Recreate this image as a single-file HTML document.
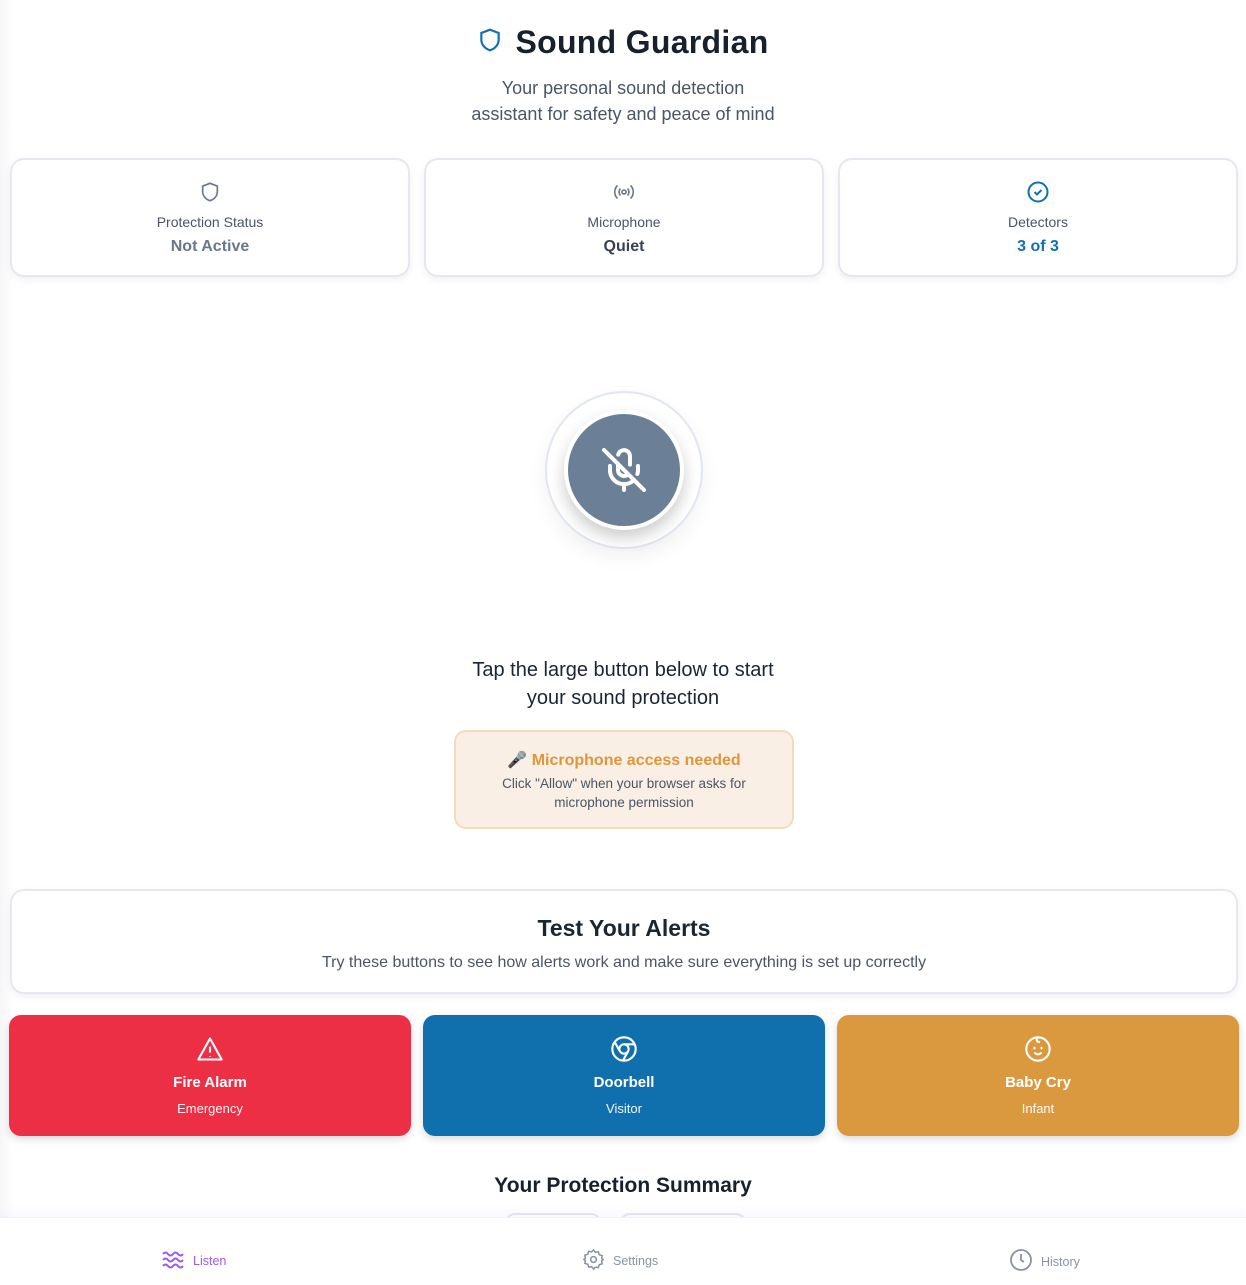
<!DOCTYPE html>
<html><head><meta charset="utf-8"><style>
*{box-sizing:border-box;margin:0;padding:0}
body{width:1246px;height:1285px;overflow:hidden;background:linear-gradient(90deg,#f6f6f8 0,#fff 14px);font-family:"Liberation Sans",sans-serif;position:relative;color:#1b2533}
.abs{position:absolute}
h1{position:absolute;top:24px;left:0;width:1246px;text-align:center;font-size:32px;font-weight:900;color:#17202c;letter-spacing:.3px}
.sub{top:75px;left:0;width:1246px;text-align:center;font-size:18px;line-height:26px;color:#4b5565}
.card{background:#fff;border:2px solid #e6e8f0;border-radius:14px;box-shadow:0 3px 8px rgba(0,0,0,.06);text-align:center}
.stat{top:158px;width:400px;height:119px}
.stat svg{margin-top:20px}
.stat .l{font-size:14px;color:#4b5565;margin-top:5px}
.stat .v{font-size:16px;font-weight:bold;margin-top:8px}
.btn{top:1015px;width:402px;height:121px;border-radius:12px;color:#fff;text-align:center;box-shadow:0 3px 8px rgba(0,0,0,.15)}
.btn svg{margin-top:20px}
.btn .t{font-size:15px;font-weight:bold;margin-top:6px}
.btn .s{font-size:13px;margin-top:10px;opacity:.95}
</style></head><body>
<h1><svg width="26" height="30" viewBox="0 0 24 24" fill="none" stroke="#1270b0" stroke-width="2" style="vertical-align:-2px;margin-right:12px"><path d="M12 2.5l8 3v6c0 5-3.5 8.5-8 10-4.5-1.5-8-5-8-10v-6z"/></svg>Sound Guardian</h1>
<div class="abs sub">Your personal sound detection<br>assistant for safety and peace of mind</div>

<div class="abs card stat" style="left:10px"><svg width="22" height="24" viewBox="0 0 24 24" fill="none" stroke="#6b7788" stroke-width="1.8"><path d="M12 2.5l8 3v6c0 5-3.5 8.5-8 10-4.5-1.5-8-5-8-10v-6z"/></svg><div class="l">Protection Status</div><div class="v" style="color:#6b7788">Not Active</div></div>
<div class="abs card stat" style="left:424px"><svg width="24" height="24" viewBox="0 0 24 24" fill="none" stroke="#6b7788" stroke-width="1.6"><circle cx="12" cy="12" r="2"/><path d="M8.5 8.5a5 5 0 000 7M15.5 8.5a5 5 0 010 7M5.5 5.5a9 9 0 000 13M18.5 5.5a9 9 0 010 13"/></svg><div class="l">Microphone</div><div class="v" style="color:#384252">Quiet</div></div>
<div class="abs card stat" style="left:838px"><svg width="24" height="24" viewBox="0 0 24 24" fill="none" stroke="#1270b0" stroke-width="2"><circle cx="12" cy="12" r="9.5"/><path d="M8.5 12l2.5 2.5 4.5-4.5"/></svg><div class="l">Detectors</div><div class="v" style="color:#1270b0">3 of 3</div></div>

<div class="abs" style="left:545px;top:391px;width:158px;height:158px;border-radius:50%;background:#fff;border:2px solid #e1e6f0;box-shadow:0 8px 20px rgba(0,0,0,.06)"></div>
<div class="abs" style="left:564px;top:410px;width:120px;height:120px;border-radius:50%;background:#6b7f96;border:4px solid #fff;box-shadow:0 8px 16px rgba(0,0,0,.2)"></div>
<svg class="abs" style="left:600px;top:446px" width="48" height="48" viewBox="0 0 24 24" fill="none" stroke="#fff" stroke-width="2" stroke-linecap="round"><path d="M2 2l20 20"/><path d="M9 9v3a3 3 0 005 2.2M15 9.3V5a3 3 0 00-5.9-.7"/><path d="M5 10v2a7 7 0 0012 5M19 10v2c0 .8-.1 1.4-.3 2"/><path d="M12 19v3"/></svg>

<div class="abs" style="top:656px;left:0;width:1246px;text-align:center;font-size:20px;line-height:28px;color:#1b2533">Tap the large button below to start<br>your sound protection</div>
<div class="abs" style="left:454px;top:730px;width:340px;height:99px;background:#f9efe4;border:2px solid #f3dcbc;border-radius:12px;text-align:center">
<div style="margin-top:18px;font-size:16px;font-weight:bold;color:#e0963a">🎤 Microphone access needed</div>
<div style="font-size:13.5px;line-height:19px;color:#4b5565;margin-top:4px">Click "Allow" when your browser asks for<br>microphone permission</div></div>

<div class="abs card" style="left:10px;top:889px;width:1228px;height:105px">
<div style="font-size:23px;font-weight:bold;margin-top:24px;color:#1b2533">Test Your Alerts</div>
<div style="font-size:16px;color:#4b5565;margin-top:12px">Try these buttons to see how alerts work and make sure everything is set up correctly</div></div>

<div class="abs btn" style="left:9px;background:#ec2f45"><svg width="28" height="28" viewBox="0 0 24 24" fill="none" stroke="#fff" stroke-width="1.8" stroke-linejoin="round"><path d="M12 3L2 21h20z"/><path d="M12 10v5M12 18v.5"/></svg><div class="t">Fire Alarm</div><div class="s">Emergency</div></div>
<div class="abs btn" style="left:423px;background:#1070ad"><svg width="28" height="28" viewBox="0 0 24 24" fill="none" stroke="#fff" stroke-width="1.8"><circle cx="12" cy="12" r="10"/><circle cx="12" cy="12" r="4"/><path d="M12 8h9M8.5 14l-4.5-8M15.5 14L11 22"/></svg><div class="t">Doorbell</div><div class="s">Visitor</div></div>
<div class="abs btn" style="left:837px;background:#db993f"><svg width="28" height="28" viewBox="0 0 24 24" fill="none" stroke="#fff" stroke-width="1.8" stroke-linecap="round"><circle cx="12" cy="12" r="10"/><path d="M12 2c-2 2-1 4 1 4M9 11v.5M15 11v.5M9.5 15.5a3.5 3.5 0 005 0"/></svg><div class="t">Baby Cry</div><div class="s">Infant</div></div>

<div class="abs" style="top:1174px;left:0;width:1246px;text-align:center;font-size:21px;font-weight:bold;color:#17202c">Your Protection Summary</div>
<div class="abs" style="left:505px;top:1213px;width:96px;height:20px;border:2px solid #e6e8f0;border-radius:10px;background:#fff"></div>
<div class="abs" style="left:620px;top:1213px;width:126px;height:20px;border:2px solid #e6e8f0;border-radius:10px;background:#fff"></div>

<div class="abs" style="left:0;top:1217px;width:1246px;height:68px;background:#fff;box-shadow:0 -4px 10px rgba(140,100,220,.06);border-top:1px solid #f3f0fa"></div>
<div class="abs" style="left:161px;top:1250px;font-size:12.5px;color:#9b5cf0"><svg width="24" height="20" viewBox="0 0 24 20" fill="none" stroke="#9b5cf0" stroke-width="2" style="vertical-align:-5px;margin-right:8px"><path d="M2 4q2.5-3 5 0t5 0 5 0 5 0M2 10q2.5-3 5 0t5 0 5 0 5 0M2 16q2.5-3 5 0t5 0 5 0 5 0"/></svg>Listen</div>
<div class="abs" style="left:582px;top:1248px;font-size:12.5px;color:#8a93a2"><svg width="23" height="23" viewBox="0 0 24 24" fill="none" stroke="#8a93a2" stroke-width="1.6" style="vertical-align:-6px;margin-right:8px"><circle cx="12" cy="12" r="3"/><path d="M12 2l2 2.5 3-.5 1 3 3 1-.5 3L22 12l-1.5 1.5.5 3-3 1-1 3-3-.5L12 22l-2-2.5-3 .5-1-3-3-1 .5-3L2 12l1.5-1.5-.5-3 3-1 1-3 3 .5z"/></svg>Settings</div>
<div class="abs" style="left:1009px;top:1248px;font-size:12.5px;color:#8a93a2"><svg width="24" height="24" viewBox="0 0 24 24" fill="none" stroke="#8a93a2" stroke-width="1.8" style="vertical-align:-6px;margin-right:8px"><circle cx="12" cy="12" r="10"/><path d="M12 6v6l3 2"/></svg>History</div>
</body></html>
